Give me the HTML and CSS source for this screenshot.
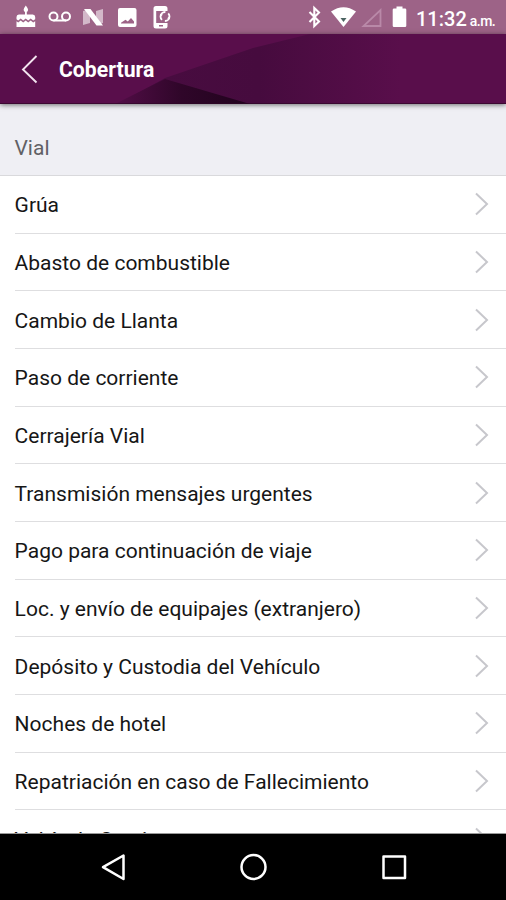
FILE: index.html
```html
<!DOCTYPE html>
<html lang="es">
<head>
<meta charset="utf-8">
<title>Cobertura</title>
<link rel="stylesheet" href="styles.css">
</head>
<body>
<div class="screen">
  <div class="status">
    <svg class="status-icons" width="180" height="34" viewBox="0 0 180 34" fill="#fff">
      <path d="M25.800 5.500q2.300 3 2.300 4.200a2.200 2.200 0 0 1-4.500 0q0-1.200 2.200-4.200zM25 11h1.800v3.500h6q2.400 0 2.400 2.500v2.200l-2 1.300-2.500-2-2.500 2-2.500-2-2.500 2-2.500-2-2.500 2-1.700-1.300V17q0-2.500 2.400-2.500H25z"/>
      <path d="M16.500 21.300l1.700 1.200 2.500-2 2.500 2 2.500-2 2.500 2 2.500-2 2.500 2 2-1.200V27h-18.700z"/>
      <g fill="none" stroke="#fff" stroke-width="2"><circle cx="53.500" cy="16.500" r="4"/><circle cx="66" cy="16.500" r="4"/><path d="M53.500 20.500H66"/></g>
      <path d="M83 11l7-2v14l-7 2zM96 11l7-2v14l-7 2z" opacity=".55"/>
      <path d="M84 9h6.500l12.500 16.500H96.500z"/>
      <path fill-rule="evenodd" d="M120 8h14.500q2 0 2 2v15q0 2-2 2H120q-2 0-2-2V10q0-2 2-2zm1 15.500h13v-2l-3-3.500-3.200 3.500-2.300-1.700-4.500 3z"/>
      <path fill-rule="evenodd" d="M156 6h9q2.500 0 2.500 2.500V11h-11.300v12h11.300v3q0 2.500-2.500 2.500h-9q-2.500 0-2.500-2.500V8.500Q153.500 6 156 6zm3 19v1.500h4V25z"/>
      <circle cx="165" cy="16.500" r="4.500" fill="none" stroke="#fff" stroke-width="1.800" stroke-dasharray="11 3.100" stroke-dashoffset="4"/>
      <path d="M160 14l3 .5-2 2zM170 19l-3-.5 2-2z"/>
    </svg>
    <svg class="status-icons" width="112" height="34" viewBox="300 0 112 34" fill="#fff">
      <path d="M309.500 12l9.500 9.500-4.700 4.500V8l4.700 4.500-9.500 9.500" fill="none" stroke="#fff" stroke-width="2.100"/>
      <path d="M331 11.500q12.500-8.500 25 0L343.500 27z"/><path d="M340.500 18h6l-3 4z" fill="#4c6462"/>
      <path d="M380.500 10v16h-17z" fill="none" stroke="#b989a8" stroke-width="1.800"/>
      <path d="M396.500 6.500h6v2h2.500q1.300 0 1.300 1.300v16q0 1.300-1.300 1.300h-11q-1.300 0-1.300-1.300v-16q0-1.300 1.300-1.300h2.500z"/>
    </svg>
    <div class="clock">11:32 <span class="meridiem">a.m.</span></div>
  </div>
  <header class="bar">
    <svg class="facets" width="506" height="70" viewBox="0 0 506 70">
      <defs>
        <linearGradient id="wide" gradientUnits="userSpaceOnUse" x1="165" y1="0" x2="400" y2="0"><stop offset="0" stop-color="#480c40"/><stop offset=".4" stop-color="#460b3e"/><stop offset="1" stop-color="#590e4b"/></linearGradient>
        <linearGradient id="low" gradientUnits="userSpaceOnUse" x1="118" y1="0" x2="245" y2="0"><stop offset="0" stop-color="#510d46"/><stop offset=".5" stop-color="#2f0629"/><stop offset="1" stop-color="#22031e"/></linearGradient>
      </defs>
      <path d="M118 70L165 44 253 14 310 0H400V70z" fill="url(#wide)"/>
      <path d="M115 70L165 45 250 70z" fill="url(#low)"/>
      <path d="M0 69.500H506" stroke="#2d0526" opacity=".65"/>
    </svg>
    <svg class="back" width="18" height="30" viewBox="0 0 18 30"><path d="M15.500 2L2 15.500 15.500 28.500" fill="none" stroke="#f2e4ef" stroke-width="1.900"/></svg>
    <h1 class="title">Cobertura</h1>
  </header>
  <main class="content">
    <h2 class="section">Vial</h2>
    <ul class="list">
      <li class="row"><span>Grúa</span><svg class="chevron" viewBox="0 0 14 24"><path d="M1 1.500L12 12 1 22.500"/></svg></li>
      <li class="row"><span>Abasto de combustible</span><svg class="chevron" viewBox="0 0 14 24"><path d="M1 1.500L12 12 1 22.500"/></svg></li>
      <li class="row"><span>Cambio de Llanta</span><svg class="chevron" viewBox="0 0 14 24"><path d="M1 1.500L12 12 1 22.500"/></svg></li>
      <li class="row"><span>Paso de corriente</span><svg class="chevron" viewBox="0 0 14 24"><path d="M1 1.500L12 12 1 22.500"/></svg></li>
      <li class="row"><span>Cerrajería Vial</span><svg class="chevron" viewBox="0 0 14 24"><path d="M1 1.500L12 12 1 22.500"/></svg></li>
      <li class="row"><span>Transmisión mensajes urgentes</span><svg class="chevron" viewBox="0 0 14 24"><path d="M1 1.500L12 12 1 22.500"/></svg></li>
      <li class="row"><span>Pago para continuación de viaje</span><svg class="chevron" viewBox="0 0 14 24"><path d="M1 1.500L12 12 1 22.500"/></svg></li>
      <li class="row"><span>Loc. y envío de equipajes (extranjero)</span><svg class="chevron" viewBox="0 0 14 24"><path d="M1 1.500L12 12 1 22.500"/></svg></li>
      <li class="row"><span>Depósito y Custodia del Vehículo</span><svg class="chevron" viewBox="0 0 14 24"><path d="M1 1.500L12 12 1 22.500"/></svg></li>
      <li class="row"><span>Noches de hotel</span><svg class="chevron" viewBox="0 0 14 24"><path d="M1 1.500L12 12 1 22.500"/></svg></li>
      <li class="row"><span>Repatriación en caso de Fallecimiento</span><svg class="chevron" viewBox="0 0 14 24"><path d="M1 1.500L12 12 1 22.500"/></svg></li>
      <li class="row"><span>Vehículo Sustituto</span><svg class="chevron" viewBox="0 0 14 24"><path d="M1 1.500L12 12 1 22.500"/></svg></li>
    </ul>
  </main>
  <nav class="nav">
    <svg width="506" height="66" viewBox="0 0 506 66" fill="none" stroke="#fff" stroke-width="2.500" stroke-linejoin="round">
      <path d="M123.500 21.500v23.500L103 33.200z"/>
      <circle cx="253.500" cy="33" r="12"/>
      <rect x="383.500" y="22.500" width="21.500" height="21.500"/>
    </svg>
  </nav>
</div>
</body>
</html>
```
FILE: styles.css
```css
* { box-sizing: border-box; }
body { margin: 0; background: #fff; font-family: Roboto, "Liberation Sans", sans-serif; }
.screen { width: 506px; height: 900px; display: flex; flex-direction: column; overflow: hidden; }
.status { height: 34px; flex: none; display: flex; align-items: center; background: #9d6387; color: #fff; }
.status-icons { display: block; flex: none; }
.status-icons + .status-icons { margin-left: 120px; }
.clock { margin-left: 4px; padding-top: 5px; font-size: 20px; font-weight: 500; line-height: 24px; letter-spacing: 0; white-space: nowrap; }
.meridiem { margin-left: -2px; font-size: 14px; letter-spacing: -.5px; }
.bar { position: relative; z-index: 1; height: 70px; flex: none; display: flex; align-items: center; padding-left: 21px; background: #590e4b; box-shadow: 0 1px 5px rgba(0, 0, 0, .55); }
.facets { position: absolute; left: 0; top: 0; }
.back { position: relative; flex: none; }
.title { position: relative; margin: 2px 0 0 20px; color: #fff; font-size: 21.200px; line-height: 28px; font-weight: 700; }
.content { flex: 1; min-height: 0; overflow: hidden; background: #fff; border-bottom: 1px solid #999; }
.section { height: 72px; margin: 0; padding: 29px 15px 0 14.500px; background: #efeff4; border-bottom: 1px solid #d9d9dc; color: #616165; font-size: 21px; line-height: 30px; font-weight: 400; }
.list { margin: 0; padding: 0; list-style: none; }
.row { height: 57.680px; margin-left: 15px; padding-right: 17px; display: flex; align-items: center; justify-content: space-between; border-bottom: 1px solid #dedee0; color: #161616; font-size: 21px; line-height: 30px; white-space: nowrap; }
.row span { padding-top: 2px; margin-left: -.4px; }
.chevron { width: 14px; height: 24px; fill: none; stroke: #c7c7cc; stroke-width: 2; }
.nav { height: 66px; flex: none; background: #000; }
.nav svg { display: block; }
```
